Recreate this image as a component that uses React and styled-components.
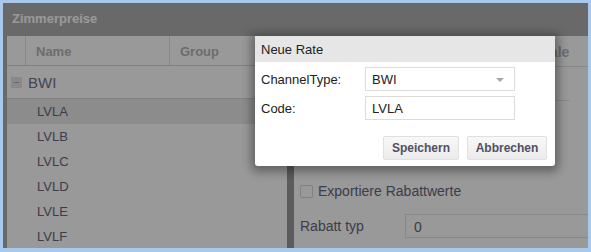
import React from "react";
import styled, { createGlobalStyle } from "styled-components";

const GlobalStyle = createGlobalStyle`
    * { box-sizing: border-box; }
    body {
        margin: 0;
        background: #a9c9ec;
        font-family: "Liberation Sans", Arial, sans-serif;
    }
`

const rows = ["LVLA", "LVLB", "LVLC", "LVLD", "LVLE", "LVLF"];

const App = () => {
    return (
        <>
            <GlobalStyle />
            <Page>
                <Window>
                    <TitleBar>Zimmerpreise</TitleBar>
                    <Body>
                        <Grid>
                            <GridHead>
                                <HeadCell width="19px" />
                                <HeadCell width="144px">Name</HeadCell>
                                <HeadCell width="117px" last>Group</HeadCell>
                            </GridHead>
                            <GroupRow>
                                <Collapse>−</Collapse>
                                BWI
                            </GroupRow>
                            {rows.map((r, i) => (
                                <Row key={r} selected={i === 0}>{r}</Row>
                            ))}
                        </Grid>
                        <Divider />
                        <Panel>
                            <PanelHead>Lokale</PanelHead>
                            <PanelField />
                            <CheckLine>
                                <CheckBox />
                                Exportiere Rabattwerte
                            </CheckLine>
                            <FieldLine>
                                <FieldLabel>Rabatt typ</FieldLabel>
                                <FieldInput>0</FieldInput>
                            </FieldLine>
                        </Panel>
                    </Body>
                    <Overlay />
                    <Modal>
                        <ModalHead>Neue Rate</ModalHead>
                        <ModalBody>
                            <FormRow>
                                <FormLabel>ChannelType:</FormLabel>
                                <Input>
                                    BWI
                                    <Arrow />
                                </Input>
                            </FormRow>
                            <FormRow>
                                <FormLabel>Code:</FormLabel>
                                <Input>LVLA</Input>
                            </FormRow>
                            <Buttons>
                                <Button width="76px">Speichern</Button>
                                <Button width="80px">Abbrechen</Button>
                            </Buttons>
                        </ModalBody>
                    </Modal>
                </Window>
            </Page>
        </>
    )
}

export default App;

const Page = styled.div`
    width: 591px;
    height: 252px;
    padding: 3px 3px 4px 3px;
`

const Window = styled.div`
    position: relative;
    width: 100%;
    height: 100%;
    display: flex;
    flex-direction: column;
    background: #b0b0b0;
    overflow: hidden;
`

const TitleBar = styled.div`
    height: 33px;
    flex-shrink: 0;
    padding: 8px 0 0 9px;
    color: #fff;
    font-size: 13px;
    font-weight: bold;
`

const Body = styled.div`
    flex: 1;
    min-height: 0;
    display: flex;
    margin-left: 4px;
    background: #fff;
    overflow: hidden;
`

const Grid = styled.div`
    width: 280px;
    flex-shrink: 0;
    display: flex;
    flex-direction: column;
`

const GridHead = styled.div`
    height: 30px;
    flex-shrink: 0;
    display: flex;
    border-bottom: 1px solid #d8d8d8;
`

const HeadCell = styled.div`
    width: ${(p) => p.width};
    border-right: ${(p) => (p.last ? "none" : "1px solid #e2e2e2")};
    padding: 8px 0 0 10px;
    color: #b6b6b6;
    font-size: 13px;
    font-weight: bold;
`

const GroupRow = styled.div`
    height: 33px;
    flex-shrink: 0;
    display: flex;
    align-items: center;
    padding-left: 4px;
    border-bottom: 1px solid #d8d8d8;
    color: #73738a;
    font-size: 15px;
`

const Collapse = styled.span`
    width: 11px;
    height: 11px;
    margin-right: 6px;
    background: #e4e4e4;
    color: #a0a0a0;
    font-size: 11px;
    line-height: 10px;
    text-align: center;
`

const Row = styled.div`
    height: 25px;
    flex-shrink: 0;
    display: flex;
    align-items: center;
    padding-left: 30px;
    background: ${(p) => (p.selected ? "#e9e9e9" : "#fff")};
    color: #66667f;
    font-size: 13px;
`

const Divider = styled.div`
    width: 7px;
    flex-shrink: 0;
    background: #9a9a9a;
`

const Panel = styled.div`
    flex: 1;
    min-width: 0;
    display: flex;
    flex-direction: column;
    padding-left: 6px;
`

const PanelHead = styled.div`
    height: 31px;
    flex-shrink: 0;
    padding: 8px 0 0 225px;
    border-bottom: 1px solid #e0e0e0;
    color: #b6b6b6;
    font-size: 14px;
    font-weight: bold;
    white-space: nowrap;
`

const PanelField = styled.div`
    height: 34px;
    flex-shrink: 0;
    width: 270px;
    border-bottom: 1px solid #e6e6e6;
`

const CheckLine = styled.div`
    display: flex;
    align-items: center;
    margin-top: 82px;
    color: #66667a;
    font-size: 14px;
`

const CheckBox = styled.span`
    width: 13px;
    height: 13px;
    margin-right: 5px;
    border: 1px solid #d5d5d5;
    border-radius: 2px;
    background: #fff;
`

const FieldLine = styled.div`
    display: flex;
    align-items: center;
    margin-top: 15px;
`

const FieldLabel = styled.div`
    width: 105px;
    flex-shrink: 0;
    color: #66667a;
    font-size: 14px;
`

const FieldInput = styled.div`
    width: 200px;
    flex-shrink: 0;
    height: 24px;
    padding: 4px 0 0 8px;
    border: 1px solid #e3e3e3;
    color: #66667a;
    font-size: 14px;
`

const Overlay = styled.div`
    position: absolute;
    inset: 0;
    background: rgba(0, 0, 0, 0.4);
`

const Modal = styled.div`
    position: absolute;
    left: 252px;
    top: 33px;
    width: 300px;
    height: 130px;
    background: #fff;
    border-radius: 0 0 3px 3px;
    box-shadow: 0 2px 10px 4px rgba(0, 0, 0, 0.35);
    display: flex;
    flex-direction: column;
`

const ModalHead = styled.div`
    height: 26px;
    padding: 6px 0 0 6px;
    background: #e6e6e6;
    color: #222;
    font-size: 13px;
`

const ModalBody = styled.div`
    padding: 5px 40px 0 6px;
    display: flex;
    flex-direction: column;
    gap: 5px;
`

const FormRow = styled.div`
    display: flex;
    align-items: center;
`

const FormLabel = styled.div`
    width: 104px;
    color: #222;
    font-size: 13px;
`

const Input = styled.div`
    position: relative;
    width: 150px;
    height: 24px;
    padding: 4px 0 0 6px;
    border: 1px solid #dcdcdc;
    color: #222;
    font-size: 13px;
`

const Arrow = styled.span`
    position: absolute;
    right: 10px;
    top: 10px;
    border-left: 4px solid transparent;
    border-right: 4px solid transparent;
    border-top: 4px solid #a8a8a8;
`

const Buttons = styled.div`
    display: flex;
    justify-content: flex-end;
    gap: 8px;
    margin: 11px -32px 0 0;
`

const Button = styled.div`
    width: ${(p) => p.width};
    height: 24px;
    display: flex;
    align-items: center;
    justify-content: center;
    border: 1px solid #e0e0e0;
    border-radius: 2px;
    background: linear-gradient(#f8f8f8, #ebebeb);
    color: #505064;
    font-size: 12px;
    font-weight: bold;
`
